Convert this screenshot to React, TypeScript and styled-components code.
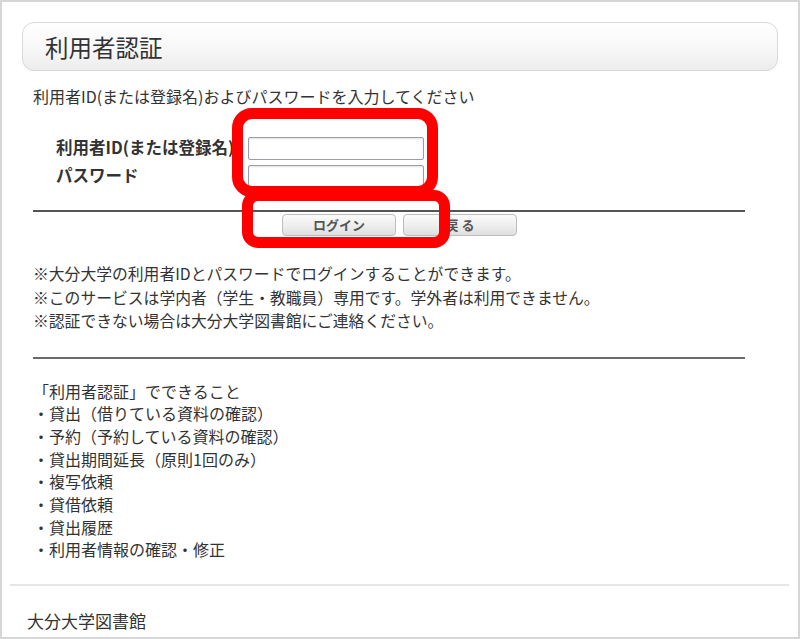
import React from "react";
import styled, { createGlobalStyle } from "styled-components";

const GlobalStyle = createGlobalStyle`
  html, body {
    margin: 0;
    padding: 0;
    background: #ffffff;
  }
  body {
    font-family: "Noto Sans CJK JP", "Noto Sans", sans-serif;
    color: #333333;
  }
`;

const Frame = styled.div`
  position: relative;
  box-sizing: border-box;
  width: 800px;
  height: 639px;
  border: 2px solid #d6d6d6;
  background: #ffffff;
  display: flex;
  flex-direction: column;
  overflow: hidden;
`;

const Main = styled.main`
  flex: 1;
  padding: 20px 20px 0 20px;
`;

const TitleBox = styled.div`
  box-sizing: border-box;
  height: 49px;
  border: 1px solid #d8d8d8;
  border-radius: 12px;
  background: linear-gradient(to bottom, #ffffff 0%, #f7f7f7 55%, #ededed 100%);
  display: flex;
  align-items: center;
  padding-left: 22px;
`;

const Title = styled.h1`
  margin: 0;
  font-size: 23.5px;
  font-weight: 400;
  color: #333333;
`;

const Content = styled.div`
  margin: 0 33px 0 11px;
`;

const Lead = styled.p`
  margin: 14px 0 0 0;
  font-size: 16px;
  line-height: 22px;
`;

const Form = styled.form`
  margin-top: 27px;
  padding-left: 23px;
  display: grid;
  grid-template-columns: 192px 176px;
  grid-auto-rows: 28px;
  align-items: center;
`;

const Label = styled.label`
  font-size: 16.5px;
  line-height: 24px;
  font-weight: 700;
  color: #333333;
  white-space: nowrap;
  margin-top: -3px;
`;

const Input = styled.input`
  box-sizing: border-box;
  width: 176px;
  height: 23px;
  border: 1px solid #9d9daa;
  border-radius: 2px;
  box-shadow: inset 0 1px 2px rgba(0, 0, 0, 0.12);
  background: #ffffff;
  margin: 0;
`;

const Rule = styled.hr<{ $color: string; $top: number }>`
  margin: ${(p) => p.$top}px 0 0 0;
  border: none;
  height: 2px;
  background: ${(p) => p.$color};
`;

const ButtonRow = styled.div`
  margin-top: 2px;
  padding-left: 249px;
  display: flex;
  gap: 7px;
`;

const Button = styled.button`
  box-sizing: border-box;
  width: 114px;
  height: 22px;
  border: 1px solid #bdbdbd;
  border-radius: 4px;
  background: linear-gradient(to bottom, #fbfbfb 0%, #ececec 60%, #dedede 100%);
  font-family: "Noto Sans CJK JP", sans-serif;
  font-size: 13px;
  font-weight: 700;
  color: #555555;
  line-height: 18px;
  padding: 0;
  cursor: pointer;
`;

const TextBlock = styled.div<{ $top: number; $size: number; $line: number }>`
  margin-top: ${(p) => p.$top}px;
  font-size: ${(p) => p.$size}px;
  line-height: ${(p) => p.$line}px;
  color: #333333;
`;

const Line = styled.div`
  white-space: nowrap;
`;

const Footer = styled.footer`
  padding: 0 9px 4px 8px;
`;

const FooterName = styled.div`
  margin-top: 23px;
  padding-left: 17px;
  font-size: 17px;
  line-height: 24px;
  color: #333333;
`;

const Highlight = styled.div<{ $x: number; $y: number; $w: number; $h: number; $r: number }>`
  position: absolute;
  box-sizing: border-box;
  left: ${(p) => p.$x}px;
  top: ${(p) => p.$y}px;
  width: ${(p) => p.$w}px;
  height: ${(p) => p.$h}px;
  border: 11px solid #ff0000;
  border-radius: ${(p) => p.$r}px;
  pointer-events: none;
`;

const notes = [
  "※大分大学の利用者IDとパスワードでログインすることができます。",
  "※このサービスは学内者（学生・教職員）専用です。学外者は利用できません。",
  "※認証できない場合は大分大学図書館にご連絡ください。",
];

const features = [
  "「利用者認証」でできること",
  "・貸出（借りている資料の確認）",
  "・予約（予約している資料の確認）",
  "・貸出期間延長（原則1回のみ）",
  "・複写依頼",
  "・貸借依頼",
  "・貸出履歴",
  "・利用者情報の確認・修正",
];

const App: React.FC = () => {
  return (
    <>
      <GlobalStyle />
      <Frame>
        <Main>
          <TitleBox>
            <Title>利用者認証</Title>
          </TitleBox>
          <Content>
            <Lead>利用者ID(または登録名)およびパスワードを入力してください</Lead>
            <Form onSubmit={(e) => e.preventDefault()}>
              <Label htmlFor="uid">利用者ID(または登録名)</Label>
              <Input id="uid" type="text" />
              <Label htmlFor="pwd">パスワード</Label>
              <Input id="pwd" type="password" />
            </Form>
            <Rule $color="#555555" $top={20} />
            <ButtonRow>
              <Button type="button">ログイン</Button>
              <Button type="button">戻 る</Button>
            </ButtonRow>
            <TextBlock $top={26} $size={15.8} $line={23.5}>
              {notes.map((n) => (
                <Line key={n}>{n}</Line>
              ))}
            </TextBlock>
            <Rule $color="#6a6a6a" $top={24} />
            <TextBlock $top={21} $size={16} $line={22.7}>
              {features.map((f) => (
                <Line key={f}>{f}</Line>
              ))}
            </TextBlock>
          </Content>
        </Main>
        <Footer>
          <Rule $color="#e6e6e6" $top={0} />
          <FooterName>大分大学図書館</FooterName>
        </Footer>
        <Highlight $x={230} $y={106} $w={206} $h={89} $r={20} />
        <Highlight $x={240} $y={188} $w={208} $h={58} $r={16} />
      </Frame>
    </>
  );
};

export default App;
